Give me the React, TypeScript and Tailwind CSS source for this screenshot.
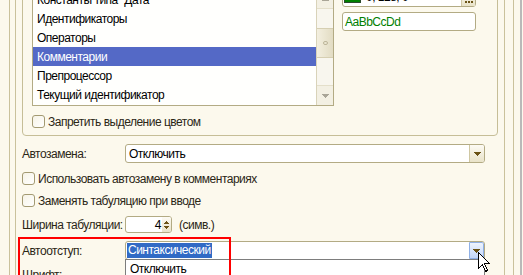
import React from "react";

const ink = "#6b5316";

function Tri({ up = false, color = ink }: { up?: boolean; color?: string }) {
  return (
    <svg width="7" height="4" viewBox="0 0 7 4" shapeRendering="crispEdges">
      <polygon points={up ? "3,0 4,0 7,4 0,4" : "0,0 7,0 4,4 3,4"} fill={color} />
    </svg>
  );
}

function Check({ label, className = "" }: { label: string; className?: string }) {
  return (
    <div className={`flex h-[13px] items-center gap-[3px] ${className}`}>
      <span className="h-[13px] w-[13px] shrink-0 rounded-[3px] border border-[#a39a72] bg-gradient-to-br from-[#f6f3e6] to-white" />
      <span className="text-[#2b2616]">{label}</span>
    </div>
  );
}

function DropButton({ hover = false }: { hover?: boolean }) {
  return (
    <div
      className={
        hover
          ? "flex w-[15px] items-center justify-center rounded-r-[2px] border border-[#8fb0e6] bg-gradient-to-b from-[#eef4fe] to-[#c2d6f8]"
          : "flex w-[15px] items-center justify-center border-l border-[#cfc7a2] bg-gradient-to-b from-[#fdfbf4] to-[#e9e3c9]"
      }
    >
      <Tri />
    </div>
  );
}

function Select({ children, hover = false }: { children: React.ReactNode; hover?: boolean }) {
  return (
    <div className="flex h-[19px] w-[360px] overflow-hidden rounded-[3px] border border-[#b3ab84] bg-white">
      <div className="flex flex-1 items-center">{children}</div>
      <DropButton hover={hover} />
    </div>
  );
}

const items = [
  "Строковые константы",
  "Константы типа \"Дата\"",
  "Идентификаторы",
  "Операторы",
  "Комментарии",
  "Препроцессор",
  "Текущий идентификатор",
];

function ColorList() {
  return (
    <div className="flex h-[118px] w-[302px] border border-[#b3ab84] bg-[#fffffd]">
      <div className="flex flex-1 flex-col justify-end overflow-hidden pb-[1px]">
        {items.map((t) => (
          <div
            key={t}
            className={
              t === "Комментарии"
                ? "flex h-[19px] shrink-0 items-center bg-[#5469c6] pl-[4px] text-white"
                : "flex h-[19px] shrink-0 items-center pl-[4px]"
            }
          >
            {t}
          </div>
        ))}
      </div>
      <div className="flex w-[17px] flex-col border-l border-[#d9d3b9] bg-[#f8f6ee]">
        <div className="flex h-[20px] items-center justify-center border-b border-[#e4dfca] bg-[#f3f0e3]">
          <Tri up color="#a9a597" />
        </div>
        <div className="flex-1">
          <div className="mt-[19px] flex h-[30px] items-center justify-center border-y border-[#d6cfb2] bg-gradient-to-r from-[#f3efdf] to-[#e2dcc3]">
            <span className="h-[4px] w-[5px] rounded-full border border-[#bdb69a]" />
          </div>
        </div>
        <div className="flex h-[20px] items-center justify-center border-t border-[#e4dfca] bg-[#f3f0e3]">
          <Tri color="#a9a597" />
        </div>
      </div>
    </div>
  );
}

function Cursor() {
  return (
    <svg width="13" height="21" viewBox="0 0 13 21" className="absolute left-[478px] top-[252px]" shapeRendering="crispEdges">
      <path d="M0.5 0.5 L0.5 16.5 L4.5 12.5 L7.5 19.5 L9.5 18.5 L6.5 11.5 L11.5 11.5 Z" fill="white" stroke="black" strokeWidth="1" />
    </svg>
  );
}

export default function App() {
  return (
    <div className="relative h-[275px] w-[523px] overflow-hidden bg-[#fcf9ed] font-['Liberation_Sans',Arial,sans-serif] text-[12px] tracking-[-0.5px] text-black">
      <div className="flex h-full">
        <div className="ml-[9px] w-px bg-[#cac29c]" />
        <div className="ml-[5px] w-px bg-[#cac29c]" />

        <div className="ml-[6px] flex w-[476px] flex-col">
          {/* colours group */}
          <div className="-mt-[20px] flex flex-col rounded-[4px] border border-[#c6be97] pl-[9px] pt-[7px] pb-[7px]">
            <div className="flex gap-[8px]">
              <ColorList />
              <div className="flex w-[134px] flex-col gap-[5px]">
                <div className="flex h-[19px] rounded-[3px] border border-[#b3ab84] bg-white">
                  <div className="flex flex-1 items-start gap-[5px] pl-[1px] pt-[1px]">
                    <span className="h-[13px] w-[17px] border border-[#2c4a2c] bg-[#008000]" />
                    <span className="leading-[14px]">0, 128, 0</span>
                  </div>
                  <div className="flex w-[14px] items-end justify-center gap-[1px] border-l border-[#cfc7a2] bg-gradient-to-b from-[#fdfbf4] to-[#e9e3c9] pb-[3px]">
                    <span className="h-[2px] w-[2px] bg-[#6b5316]" />
                    <span className="h-[2px] w-[2px] bg-[#6b5316]" />
                    <span className="h-[2px] w-[2px] bg-[#6b5316]" />
                  </div>
                </div>
                <div className="flex h-[19px] items-center rounded-[3px] border border-[#b3ab84] bg-white pl-[2px] text-[#008000]">
                  AaBbCcDd
                </div>
              </div>
            </div>
            <Check label="Запретить выделение цветом" className="mt-[9px]" />
          </div>

          {/* editing options */}
          <div className="mt-[8px] flex h-[19px] items-center">
            <span className="w-[103px] text-[#2b2616]">Автозамена:</span>
            <Select>
              <span className="pl-[3px]">Отключить</span>
            </Select>
          </div>
          <Check label="Использовать автозамену в комментариях" className="mt-[9px]" />
          <Check label="Заменять табуляцию при вводе" className="mt-[9px]" />
          <div className="mt-[9px] flex h-[17px] items-center">
            <span className="w-[103px] text-[#2b2616]">Ширина табуляции:</span>
            <div className="flex h-[17px] w-[47px] overflow-hidden rounded-[3px] border border-[#b3ab84] bg-white">
              <span className="flex flex-1 items-center justify-end pr-[1px]">4</span>
              <div className="flex w-[9px] flex-col items-center justify-center gap-[2px] bg-gradient-to-b from-[#fdfbf4] to-[#e9e3c9]">
                <svg width="5" height="3" viewBox="0 0 5 3" shapeRendering="crispEdges">
                  <polygon points="2,0 3,0 5,3 0,3" fill={ink} />
                </svg>
                <svg width="5" height="3" viewBox="0 0 5 3" shapeRendering="crispEdges">
                  <polygon points="0,0 5,0 3,3 2,3" fill={ink} />
                </svg>
              </div>
            </div>
            <span className="ml-[7px] text-[#2b2616]">(симв.)</span>
          </div>
          <div className="mt-[8px] flex h-[19px] items-center">
            <span className="w-[103px] text-[#2b2616]">Автоотступ:</span>
            <Select hover>
              <span className="ml-[1px] bg-[#316ac5] px-[1px] leading-[15px] text-white">Синтаксический</span>
            </Select>
          </div>
          <div className="mt-[5px] flex h-[19px] items-center">
            <span className="w-[103px] text-[#2b2616]">Шрифт:</span>
            <div className="h-[19px] w-[360px] rounded-[3px] border border-[#b3ab84] bg-white" />
          </div>
        </div>

        <div className="ml-[6px] w-px bg-[#cac29c]" />
        <div className="ml-[8px] w-px bg-[#cac29c]" />
        <div className="ml-[6px] w-[2px] bg-[#b9b9b9]" />
      </div>

      {/* open dropdown list */}
      <div className="absolute left-[125px] top-[259px] h-[60px] w-[360px] border border-[#7d7d7d] bg-white">
        <div className="flex h-[17px] items-center pl-[4px]">Отключить</div>
        <div className="flex h-[17px] items-center pl-[4px]">Стандартный</div>
        <div className="flex h-[17px] items-center pl-[4px]">Синтаксический</div>
      </div>

      {/* annotation */}
      <div className="absolute left-[18px] top-[237px] h-[60px] w-[213px] border-2 border-[#ff0000]" />

      <Cursor />
    </div>
  );
}
